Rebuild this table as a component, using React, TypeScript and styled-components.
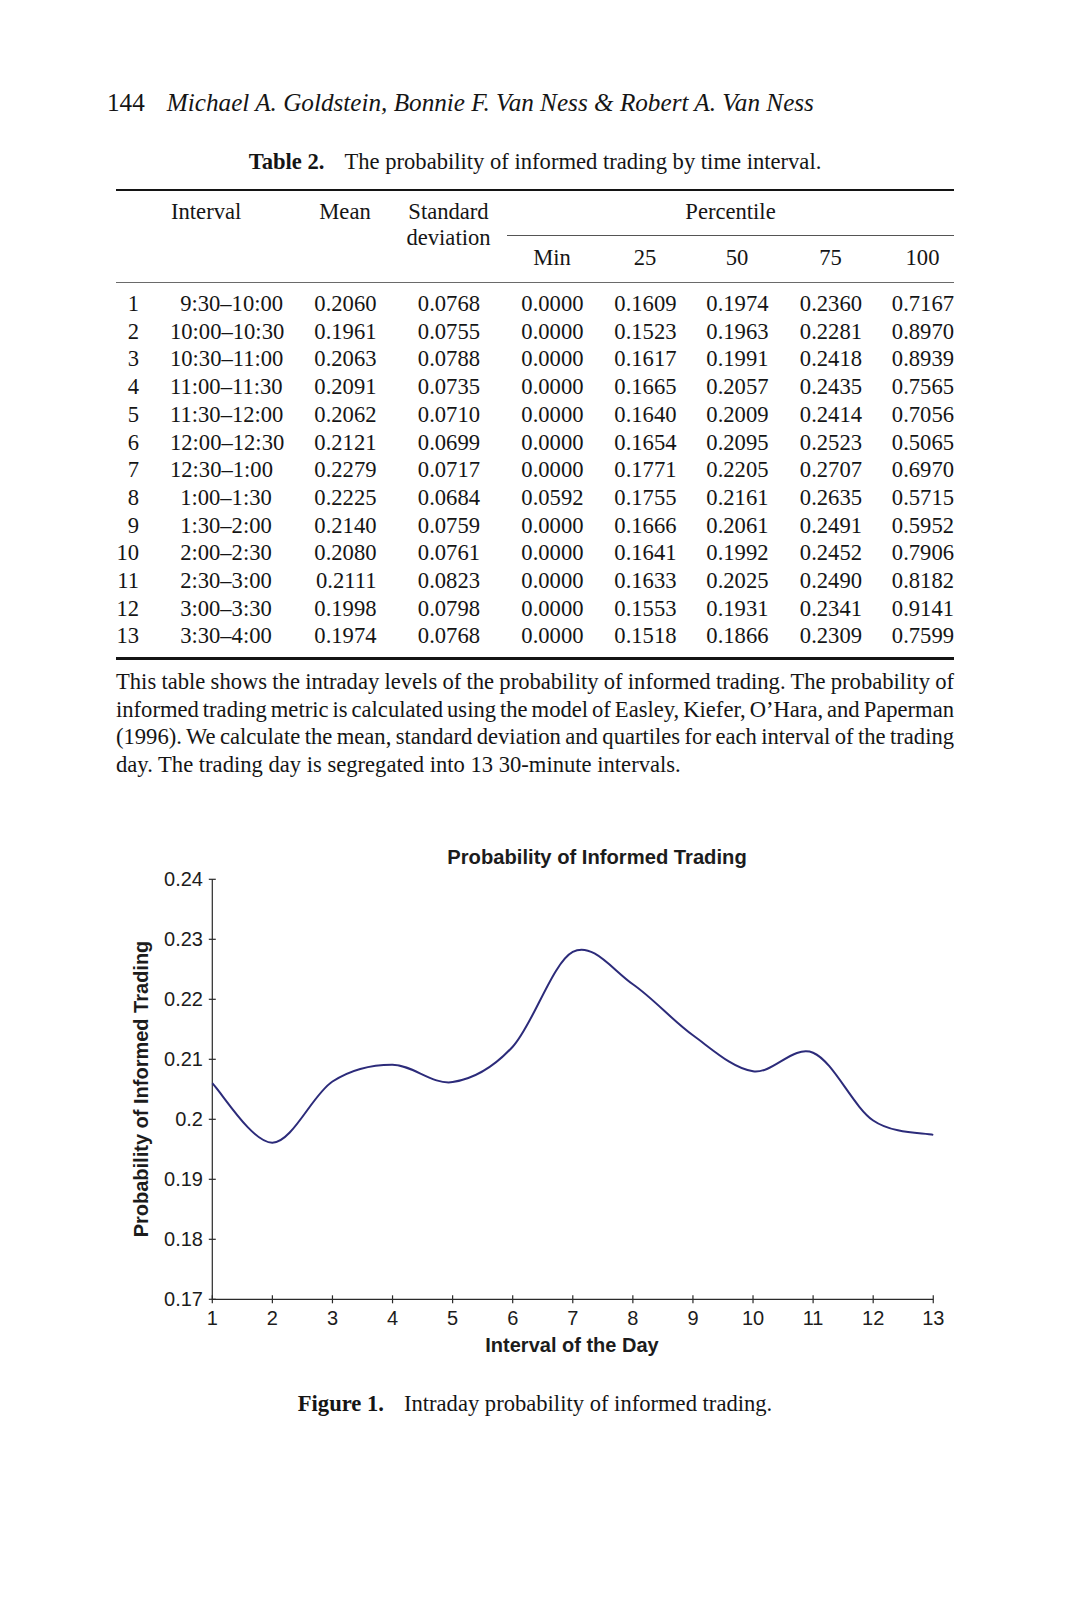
import React from "react";
import styled, { createGlobalStyle } from "styled-components";

const GlobalStyle = createGlobalStyle`
  html, body { margin: 0; padding: 0; background: #ffffff; }
  body { font-family: "Liberation Serif", "Times New Roman", serif; color: #151515; }
`;

const COLS = "29px 148px 83.5px 103.5px 103.5px 93px 92px 93.5px 92px";

const Page = styled.div`
  width: 1069px;
  height: 1600px;
  box-sizing: border-box;
  padding: 88px 0 0 116px;
  background: #fff;
`;

const Column = styled.div`
  width: 838px;
  display: flex;
  flex-direction: column;
  font-family: "Liberation Serif", "Times New Roman", serif;
  font-size: 22.6px;
`;

const RunningHead = styled.div`
  margin-left: -9px;
  font-size: 25.2px;
  line-height: 30px;
  display: flex;
  align-items: baseline;
`;

const PageNum = styled.span`
  margin-right: 22px;
`;

const Authors = styled.span`
  font-style: italic;
`;

const Caption = styled.div<{ $mt: number }>`
  margin-top: ${(p) => p.$mt}px;
  line-height: 28px;
  text-align: center;
`;

const CaptionLabel = styled.span`
  font-weight: 700;
  margin-right: 20px;
`;

const Table = styled.div`
  margin-top: 13px;
  border-top: 2px solid #141414;
  border-bottom: 3px solid #141414;
`;

const HeadGrid = styled.div`
  display: grid;
  grid-template-columns: ${COLS};
  grid-template-rows: 45px 46px;
  border-bottom: 1px solid #6a6a6a;
  line-height: 27.6px;
`;

const HeadInterval = styled.div`
  grid-column: 2;
  grid-row: 1 / 3;
  padding: 7px 0 0 26px;
`;

const HeadNum = styled.div<{ $col: number; $row: string; $lh?: number; $pt?: number }>`
  grid-column: ${(p) => p.$col};
  grid-row: ${(p) => p.$row};
  justify-self: end;
  width: 63px;
  display: flex;
  flex-direction: column;
  align-items: center;
  white-space: nowrap;
  padding-top: ${(p) => p.$pt ?? (p.$row === "2" ? 8 : 7)}px;
  line-height: ${(p) => p.$lh ?? 27.6}px;
`;

const HeadPercentile = styled.div`
  grid-column: 5 / 10;
  grid-row: 1;
  margin-left: 27px;
  padding-top: 7px;
  text-align: center;
  border-bottom: 1px solid #555;
`;

const Body = styled.div`
  padding: 7px 0 7px;
`;

const Row = styled.div`
  display: grid;
  grid-template-columns: ${COLS};
  line-height: 27.7px;
  white-space: nowrap;
`;

const NumCell = styled.div`
  text-align: right;
`;

const IndexCell = styled.div`
  text-align: right;
  padding-right: 6px;
`;

const IntervalCell = styled.div`
  padding-left: 25px;
`;

const FigPad = styled.span`
  display: inline-block;
  width: 0.45em;
`;

const Note = styled.div`
  margin-top: 8px;
`;

const NoteLine = styled.div<{ $last?: boolean }>`
  line-height: 27.6px;
  text-align: ${(p) => (p.$last ? "left" : "justify")};
  text-align-last: ${(p) => (p.$last ? "left" : "justify")};
  word-spacing: ${(p) => (p.$last ? "0" : "-3px")};
`;

const Figure = styled.div`
  margin-top: 61px;
  width: 838px;
  height: 520px;
`;

const ChartSvg = styled.svg`
  display: block;
  font-family: "Liberation Sans", Arial, sans-serif;
`;

type RowData = [string, string, string[]];

const rows: RowData[] = [
  ["1", "9:30–10:00", ["0.2060", "0.0768", "0.0000", "0.1609", "0.1974", "0.2360", "0.7167"]],
  ["2", "10:00–10:30", ["0.1961", "0.0755", "0.0000", "0.1523", "0.1963", "0.2281", "0.8970"]],
  ["3", "10:30–11:00", ["0.2063", "0.0788", "0.0000", "0.1617", "0.1991", "0.2418", "0.8939"]],
  ["4", "11:00–11:30", ["0.2091", "0.0735", "0.0000", "0.1665", "0.2057", "0.2435", "0.7565"]],
  ["5", "11:30–12:00", ["0.2062", "0.0710", "0.0000", "0.1640", "0.2009", "0.2414", "0.7056"]],
  ["6", "12:00–12:30", ["0.2121", "0.0699", "0.0000", "0.1654", "0.2095", "0.2523", "0.5065"]],
  ["7", "12:30–1:00", ["0.2279", "0.0717", "0.0000", "0.1771", "0.2205", "0.2707", "0.6970"]],
  ["8", "1:00–1:30", ["0.2225", "0.0684", "0.0592", "0.1755", "0.2161", "0.2635", "0.5715"]],
  ["9", "1:30–2:00", ["0.2140", "0.0759", "0.0000", "0.1666", "0.2061", "0.2491", "0.5952"]],
  ["10", "2:00–2:30", ["0.2080", "0.0761", "0.0000", "0.1641", "0.1992", "0.2452", "0.7906"]],
  ["11", "2:30–3:00", ["0.2111", "0.0823", "0.0000", "0.1633", "0.2025", "0.2490", "0.8182"]],
  ["12", "3:00–3:30", ["0.1998", "0.0798", "0.0000", "0.1553", "0.1931", "0.2341", "0.9141"]],
  ["13", "3:30–4:00", ["0.1974", "0.0768", "0.0000", "0.1518", "0.1866", "0.2309", "0.7599"]],
];

const means = rows.map((r) => parseFloat(r[2][0]));

const X0 = 96.3;
const XS = 60.08;
const Y0 = 39.3;
const YS = 6000;
const px = (i: number) => X0 + i * XS;
const py = (v: number) => Y0 + (0.24 - v) * YS;
const YB = py(0.17);

function smoothPath(vals: number[]) {
  const pts = vals.map((v, i) => [px(i), py(v)]);
  let d = `M${pts[0][0].toFixed(2)},${pts[0][1].toFixed(2)}`;
  for (let i = 0; i < pts.length - 1; i++) {
    const p0 = pts[Math.max(i - 1, 0)];
    const p1 = pts[i];
    const p2 = pts[i + 1];
    const p3 = pts[Math.min(i + 2, pts.length - 1)];
    const c1x = p1[0] + (p2[0] - p0[0]) / 6;
    const c1y = p1[1] + (p2[1] - p0[1]) / 6;
    const c2x = p2[0] - (p3[0] - p1[0]) / 6;
    const c2y = p2[1] - (p3[1] - p1[1]) / 6;
    d += ` C${c1x.toFixed(2)},${c1y.toFixed(2)} ${c2x.toFixed(2)},${c2y.toFixed(2)} ${p2[0].toFixed(2)},${p2[1].toFixed(2)}`;
  }
  return d;
}

const yTicks = [0.24, 0.23, 0.22, 0.21, 0.2, 0.19, 0.18, 0.17];

function Chart() {
  return (
    <ChartSvg width={838} height={520} viewBox="0 0 838 520">
      <text x={481} y={17} dy="0.35em" textAnchor="middle" fontSize={20.2} fontWeight={700} fill="#1c1c1c">
        Probability of Informed Trading
      </text>
      <text
        transform="translate(25,249) rotate(-90)"
        dy="0.35em"
        textAnchor="middle"
        fontSize={20}
        fontWeight={700}
        fill="#1c1c1c"
      >
        Probability of Informed Trading
      </text>
      <line x1={X0} y1={Y0} x2={X0} y2={YB} stroke="#2a2a2a" strokeWidth={1.2} />
      <line x1={X0} y1={YB} x2={px(12)} y2={YB} stroke="#2a2a2a" strokeWidth={1.2} />
      {yTicks.map((t) => (
        <g key={t}>
          <line x1={X0 - 3.5} y1={py(t)} x2={X0 + 3.5} y2={py(t)} stroke="#2a2a2a" strokeWidth={1.2} />
          <text x={87} y={py(t)} dy="0.35em" textAnchor="end" fontSize={20} fill="#1c1c1c">
            {t === 0.2 ? "0.2" : t.toFixed(2)}
          </text>
        </g>
      ))}
      {means.map((_, i) => (
        <g key={i}>
          <line x1={px(i)} y1={YB - 4} x2={px(i)} y2={YB + 4} stroke="#2a2a2a" strokeWidth={1.2} />
          <text x={px(i)} y={478} dy="0.35em" textAnchor="middle" fontSize={20} fill="#1c1c1c">
            {i + 1}
          </text>
        </g>
      ))}
      <text x={456} y={505} dy="0.35em" textAnchor="middle" fontSize={20} fontWeight={700} fill="#1c1c1c">
        Interval of the Day
      </text>
      <path d={smoothPath(means)} fill="none" stroke="#2c2b7a" strokeWidth={2} strokeLinejoin="round" />
    </ChartSvg>
  );
}

export default function App() {
  return (
    <>
      <GlobalStyle />
      <Page>
        <Column>
          <RunningHead>
            <PageNum>144</PageNum>
            <Authors>Michael A. Goldstein, Bonnie F. Van Ness &amp; Robert A. Van Ness</Authors>
          </RunningHead>

          <Caption $mt={30}>
            <CaptionLabel>Table 2.</CaptionLabel>
            The probability of informed trading by time interval.
          </Caption>

          <Table>
            <HeadGrid>
              <HeadInterval>Interval</HeadInterval>
              <HeadNum $col={3} $row="1 / 3">Mean</HeadNum>
              <HeadNum $col={4} $row="1 / 3" $lh={25.5} $pt={8}>
                <span>Standard</span>
                <span>deviation</span>
              </HeadNum>
              <HeadPercentile>Percentile</HeadPercentile>
              <HeadNum $col={5} $row="2">Min</HeadNum>
              <HeadNum $col={6} $row="2">25</HeadNum>
              <HeadNum $col={7} $row="2">50</HeadNum>
              <HeadNum $col={8} $row="2">75</HeadNum>
              <HeadNum $col={9} $row="2">100</HeadNum>
            </HeadGrid>
            <Body>
              {rows.map(([n, interval, vals]) => (
                <Row key={n}>
                  <IndexCell>{n}</IndexCell>
                  <IntervalCell>
                    {/^\d:/.test(interval) && <FigPad />}
                    {interval}
                  </IntervalCell>
                  {vals.map((v, j) => (
                    <NumCell key={j}>{v}</NumCell>
                  ))}
                </Row>
              ))}
            </Body>
          </Table>

          <Note>
            <NoteLine>
              This table shows the intraday levels of the probability of informed trading. The probability of
            </NoteLine>
            <NoteLine>
              informed trading metric is calculated using the model of Easley, Kiefer, O’Hara, and Paperman
            </NoteLine>
            <NoteLine>
              (1996). We calculate the mean, standard deviation and quartiles for each interval of the trading
            </NoteLine>
            <NoteLine $last>day. The trading day is segregated into 13 30-minute intervals.</NoteLine>
          </Note>

          <Figure>
            <Chart />
          </Figure>

          <Caption $mt={30}>
            <CaptionLabel>Figure 1.</CaptionLabel>
            Intraday probability of informed trading.
          </Caption>
        </Column>
      </Page>
    </>
  );
}
